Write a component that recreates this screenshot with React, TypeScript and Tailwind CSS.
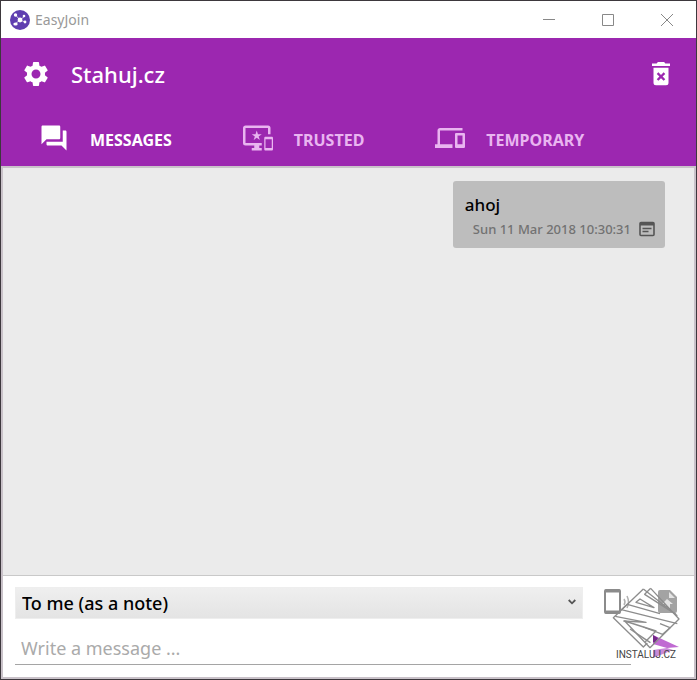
import { useState } from 'react';
import type { ReactNode } from 'react';
import { MdDevices, MdForum, MdImportantDevices, MdSettings } from 'react-icons/md';

// ── Icons ──────────────────────────────────────────────────────────────────

function LogoIcon() {
  return (
    <svg width={20} height={20} viewBox="0 0 20 20" aria-hidden="true">
      <circle cx="10" cy="10" r="10" fill="#5f3fb0" />
      <path d="M5.500 5L10 10l5-4M10 10l5 2M10 10l-5 4" stroke="#fff" strokeWidth="0.700" fill="none" />
      <g fill="#fff">
        <circle cx="10" cy="10" r="2.400" />
        <circle cx="5.500" cy="5" r="1.700" />
        <circle cx="14" cy="6" r="1.300" />
        <circle cx="15" cy="12" r="1.400" />
        <ellipse cx="5.500" cy="14" rx="2.200" ry="1.500" />
      </g>
    </svg>
  );
}

function TrashIcon() {
  return (
    <svg width={30} height={30} viewBox="0 0 24 24" fill="currentColor" aria-hidden="true">
      <path fillRule="evenodd" d="M6 7h12V19a2 2 0 0 1-2 2H8a2 2 0 0 1-2-2zM9.900 10.600l-1.300 1.300 2.100 2.100-2.100 2.100 1.300 1.300 2.100-2.100 2.100 2.100 1.300-1.300-2.100-2.100 2.100-2.100-1.300-1.300-2.100 2.100z" />
      <path d="M4.800 3.600h3.700l1-1.200h5l1 1.200h3.700v2H4.800z" />
    </svg>
  );
}

function NoteIcon() {
  return (
    <svg width={16} height={16} viewBox="0 0 16 16" aria-hidden="true">
      <rect x="1" y="1.500" width="14" height="13" rx="1" fill="none" stroke="#555" strokeWidth="1.600" />
      <path d="M1 1.500h14v3H1z" fill="#555" />
      <path d="M3.500 7.500h9M3.500 10.500h6" stroke="#555" strokeWidth="1.600" />
    </svg>
  );
}

function PhoneSendIcon() {
  return (
    <svg width={30} height={30} viewBox="0 0 30 30" fill="none" stroke="#8b8b8b" aria-hidden="true">
      <rect x="2" y="3" width="15" height="23" rx="1" strokeWidth="2" />
      <path d="M2 4h15M2 25h15" strokeWidth="3" />
      <path d="M21 12q2 3 0 6M24 9q3 6 0 12" strokeWidth="1.500" stroke="#b0b0b0" />
    </svg>
  );
}

function FileSendIcon() {
  return (
    <svg width={22} height={26} viewBox="0 0 22 26" aria-hidden="true">
      <path d="M3 1h10l7 7v14a2 2 0 0 1-2 2H3a2 2 0 0 1-2-2V3a2 2 0 0 1 2-2z" fill="#a3a3a3" />
      <path d="M12 3v6h6zM10 10l-5 5h3v4h5v-4h3z" fill="#e4e4e4" />
    </svg>
  );
}

function SendIcon() {
  return (
    <svg width={28} height={26} viewBox="0 0 28 26" aria-hidden="true">
      <path d="M2 2l26 12-12 1-14-4z" fill="#c06ad2" />
      <path d="M2 2l5 3-3 5-2-1z" fill="#75298a" />
      <path d="M2 17l14-2 6 2L2 25z" fill="#c98ad8" />
    </svg>
  );
}

// Crossed cards with a scribbled ribbon, laid over the footer actions
function Watermark() {
  return (
    <div className="pointer-events-none absolute right-2 bottom-4 flex w-20 flex-col items-center">
      <svg width={68} height={62} viewBox="66 46 204 186" fill="none" stroke="#8d8d8d" strokeWidth="4" strokeLinejoin="round" aria-hidden="true">
        <path d="M160 52L70 138L160 226L172 214" />
        <path d="M160 52L262 132M182 50L267 142L180 228L104 148L198 178L166 210" />
        <path d="M182 50L164 68L258 128" />
        <path d="M150 82L138 92L192 108Z" />
        <path d="M112 98L94 114L262 156M112 98L210 126" />
        <path d="M76 134L168 152L100 148" />
        <path d="M120 172L180 212L140 186M210 156L240 168L218 188L160 166" />
      </svg>
      <span className="font-['Roboto','Liberation_Sans',sans-serif] text-[10px] leading-3 text-[#444]">INSTALUJ.CZ</span>
    </div>
  );
}

// ── Title bar ──────────────────────────────────────────────────────────────

function TitleBar() {
  return (
    <header className="flex h-[37px] items-center bg-white pl-[9px]">
      <LogoIcon />
      <h1 className="ml-[5px] flex-1 text-sm text-[#999]">EasyJoin</h1>
      <div className="flex text-[#888]">
        <WindowButton label="Minimize"><path d="M0 5.500h12" /></WindowButton>
        <WindowButton label="Maximize"><path d="M.5.500h11v11H.5z" /></WindowButton>
        <WindowButton label="Close"><path d="M0 0l12 12M12 0L0 12" /></WindowButton>
      </div>
    </header>
  );
}

function WindowButton({ label, children }: { label: string; children: ReactNode }) {
  return (
    <button type="button" aria-label={label} className="flex h-9 w-[59px] items-center justify-center">
      <svg width={12} height={12} viewBox="0 0 12 12" fill="none" stroke="currentColor">{children}</svg>
    </button>
  );
}

// ── Tabs ───────────────────────────────────────────────────────────────────

const tabs = [
  { id: 'messages', label: 'MESSAGES', icon: <MdForum size={30} /> },
  { id: 'trusted', label: 'TRUSTED', icon: <MdImportantDevices size={30} /> },
  { id: 'temporary', label: 'TEMPORARY', icon: <MdDevices size={30} /> },
];

interface TabBarProps {
  active: string;
  onChange: (id: string) => void;
}

function TabBar({ active, onChange }: TabBarProps) {
  return (
    <nav role="tablist" className="flex gap-[71px] pl-[38px]">
      {tabs.map(tab => (
        <button
          key={tab.id}
          type="button"
          role="tab"
          aria-selected={active === tab.id}
          onClick={() => onChange(tab.id)}
          className={`flex h-14 items-center gap-[21px] text-base font-bold ${active === tab.id ? 'text-white' : 'text-[#e9b5f0]'}`}
        >
          {tab.icon}
          <span className="pt-1">{tab.label}</span>
        </button>
      ))}
    </nav>
  );
}

// ── Messages ───────────────────────────────────────────────────────────────

function MessageBubble({ text, time }: { text: string; time: string }) {
  return (
    <article className="rounded-[3px] bg-[#bdbdbd] pt-3 pr-[10px] pb-[7px] pl-3">
      <p className="text-[17px] leading-6 font-medium text-black">{text}</p>
      <div className="flex items-center gap-2 pl-2 text-[13px] leading-6 font-medium text-[#727272]">
        <time>{time}</time>
        <NoteIcon />
      </div>
    </article>
  );
}

function Composer() {
  const [message, setMessage] = useState('');

  return (
    <form className="relative flex gap-5 border-t border-[#c9c9c9] bg-white pt-[11px] pr-[15px] pb-3 pl-3" onSubmit={e => e.preventDefault()}>
      <div className="flex flex-1 flex-col gap-3">
        <div className="relative">
          <select aria-label="Recipient" className="h-8 w-full appearance-none border border-[#eee] bg-linear-to-b from-[#efefef] to-[#e4e4e4] px-[6px] text-lg leading-7 font-medium text-black">
            <option>To me (as a note)</option>
          </select>
          <svg width={8} height={6} viewBox="0 0 8 6" className="pointer-events-none absolute top-3 right-[7px]" fill="none" stroke="#555" strokeWidth="1.800" aria-hidden="true">
            <path d="M.7 1L4 4.300 7.300 1" />
          </svg>
        </div>
        <input
          aria-label="Message"
          placeholder="Write a message ..."
          value={message}
          onChange={e => setMessage(e.target.value)}
          className="-mr-12 h-[34px] border-b border-[#a5a5a5] px-[6px] text-lg text-black outline-none placeholder:text-[#aaa]"
        />
      </div>
      <div className="flex flex-col items-end gap-4">
        <div className="flex items-center gap-6">
          <button type="button" aria-label="Send to device"><PhoneSendIcon /></button>
          <button type="button" aria-label="Send file"><FileSendIcon /></button>
        </div>
        <button type="submit" aria-label="Send"><SendIcon /></button>
      </div>
      <Watermark />
    </form>
  );
}

export default function App() {
  const [active, setActive] = useState('messages');

  return (
    <div className="flex min-h-screen flex-col border border-[#3d383d] bg-[#ebebeb] font-['Noto_Sans','Open_Sans',sans-serif]">
      <TitleBar />
      <section className="bg-[#9c27b0] text-white">
        <div className="flex h-[72px] items-center pr-5 pl-5">
          <button type="button" aria-label="Settings"><MdSettings size={30} /></button>
          <h2 className="ml-5 flex-1 text-[22px] font-medium">Stahuj.cz</h2>
          <button type="button" aria-label="Delete all"><TrashIcon /></button>
        </div>
        <TabBar active={active} onChange={setActive} />
      </section>
      <div className="flex flex-1 flex-col border-2 border-[#c9c2c9]">
        <main className="flex flex-1 flex-col items-end pt-[13px] pr-[29px]">
          <MessageBubble text="ahoj" time="Sun 11 Mar 2018 10:30:31" />
        </main>
        <Composer />
      </div>
    </div>
  );
}
